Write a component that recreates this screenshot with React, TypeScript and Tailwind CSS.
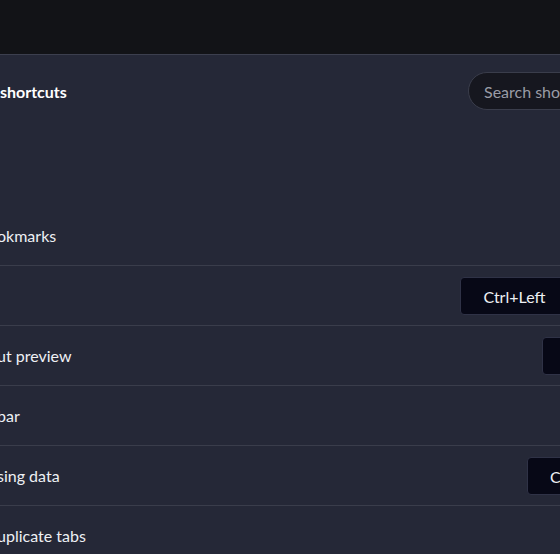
import React from "react"

interface ShortcutRow {
  label: string
  keys: string[]
}

const rows: ShortcutRow[] = [
  { label: "okmarks", keys: ["F4"] },
  { label: "", keys: ["Ctrl+Left", "Alt+Left"] },
  { label: "ut preview", keys: ["Ctrl+Shift+P"] },
  { label: "bar", keys: ["F6"] },
  { label: "sing data", keys: ["Ctrl+Shift+Del"] },
  { label: "uplicate tabs", keys: ["F8"] },
]

function Kbd({ children }: { children: React.ReactNode }) {
  return (
    <kbd className="h-[38px] flex items-center px-[22px] pt-[2px] rounded-[4px] border border-[#2f3246] bg-[#070816] text-[16px] text-[#eef0f4] font-['Lato',sans-serif]">
      {children}
    </kbd>
  )
}

export default function App() {
  return (
    <div className="w-[560px] h-[554px] overflow-hidden bg-[#252837] text-[#eef0f4] font-['Lato',sans-serif]">
      <div className="h-[55px] bg-[#121317] border-b border-[#3c3f4e]" />
      <div className="w-[674px]">
        <div className="flex items-center justify-between pt-[17px]">
          <h2 className="text-[16px] font-bold text-white pt-[2px]">shortcuts</h2>
          <input
            className="w-[206px] h-[38px] rounded-full border border-[#3a3d4b] bg-[#16171f] pl-[15px] text-[16px] text-[#eef0f4] placeholder:text-[#9a9ca6] outline-none"
            placeholder="Search shortcuts"
          />
        </div>
        <div className="mt-[95px]">
          {rows.map((row, i) => (
            <div
              key={i}
              className={`h-[60px] flex items-center justify-between ${i > 0 ? "border-t border-[#3a3d4b]" : ""}`}
            >
              <span className="-ml-[3px] pt-px text-[16px]">{row.label}</span>
              <div className="flex items-center gap-[3px]">
                {row.keys.map((k) => (
                  <Kbd key={k}>{k}</Kbd>
                ))}
              </div>
            </div>
          ))}
        </div>
      </div>
    </div>
  )
}
